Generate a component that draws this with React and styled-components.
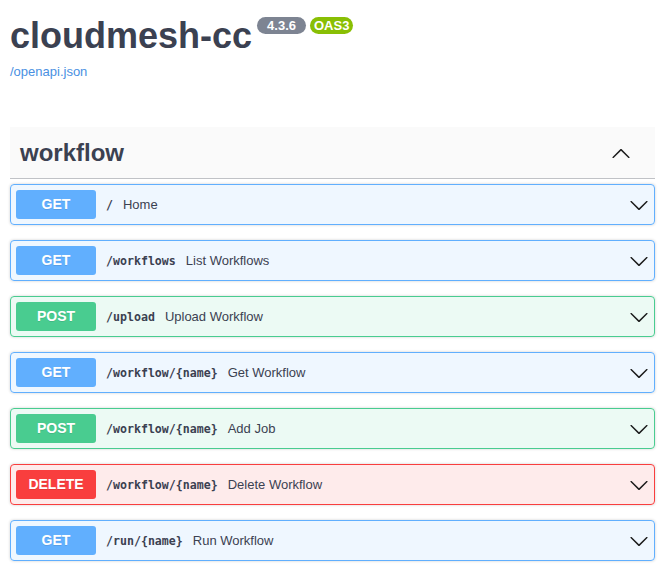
import React from "react";
import styled, { createGlobalStyle } from "styled-components";

const GlobalStyle = createGlobalStyle`
  body {
    margin: 0;
    background: #fff;
    font-family: "Liberation Sans", Arial, sans-serif;
    color: #3b4151;
  }
`;

const Wrapper = styled.div`
  padding: 15px 11px 0 10px;
`;

const Info = styled.div`
  margin-bottom: 48px;
`;

const TitleRow = styled.div`
  display: flex;
  align-items: flex-start;
`;

const Title = styled.h2`
  margin: 0;
  font-size: 36px;
  line-height: 41px;
  font-weight: 700;
  color: #3b4151;
`;

const Badge = styled.small`
  display: inline-block;
  margin: 2px 0 0 ${props => (props.first ? 5 : 4)}px;
  padding: 2px ${props => props.pad}px;
  border-radius: 57px;
  background: ${props => props.color};
  color: #fff;
  font-size: 13px;
  line-height: 13px;
  font-weight: 700;
`;

const SpecLink = styled.a`
  display: block;
  margin-top: 8px;
  font-size: 13px;
  line-height: 15px;
  color: #4990e2;
  text-decoration: none;
`;

const TagHeader = styled.div`
  display: flex;
  align-items: center;
  height: 51px;
  padding: 0 24px 0 10px;
  background: #fafafa;
  border-bottom: 1px solid rgba(59, 65, 81, 0.3);
  margin-bottom: 5px;
`;

const TagName = styled.h3`
  flex: 1;
  margin: 0;
  font-size: 24px;
  font-weight: 700;
  color: #3b4151;
`;

const methods = {
  GET: "97, 175, 254",
  POST: "73, 204, 144",
  DELETE: "249, 62, 62",
};

const Opblock = styled.div`
  display: flex;
  align-items: center;
  height: 29px;
  padding: 5px;
  margin-bottom: 15px;
  border: 1px solid rgb(${props => methods[props.method]});
  background: rgba(${props => methods[props.method]}, 0.1);
  border-radius: 4px;
  box-shadow: 0 0 3px rgba(0, 0, 0, 0.19);
`;

const Method = styled.span`
  min-width: 80px;
  padding: 6px 0;
  border-radius: 3px;
  background: rgb(${props => methods[props.method]});
  color: #fff;
  font-size: 14px;
  line-height: 17px;
  font-weight: 700;
  text-align: center;
  text-shadow: 0 1px 0 rgba(0, 0, 0, 0.1);
`;

const Path = styled.span`
  padding: 0 10px;
  font-family: "DejaVu Sans Mono", "Liberation Mono", monospace;
  font-size: 11.6px;
  font-weight: 600;
  color: #3b4151;
`;

const Description = styled.span`
  flex: 1;
  font-size: 13px;
  color: #3b4151;
`;

const Arrow = ({ up }) => (
  <svg width="20" height="20" viewBox="0 0 20 20" fill="#1b1b1b">
    {up ? (
      <path d="M17.418 14.908c.272.268.709.268.979 0s.271-.701 0-.969l-7.908-7.83c-.27-.268-.707-.268-.979 0l-7.908 7.83c-.27.268-.27.701 0 .969.271.268.709.268.979 0L10 7.761l7.418 7.147z" />
    ) : (
      <path d="M17.418 6.109c.272-.268.709-.268.979 0s.271.701 0 .969l-7.908 7.83c-.27.268-.707.268-.979 0l-7.908-7.83c-.27-.268-.27-.701 0-.969.271-.268.709-.268.979 0L10 13.25l7.418-7.141z" />
    )}
  </svg>
);

const operations = [
  { method: "GET", path: "/", summary: "Home" },
  { method: "GET", path: "/workflows", summary: "List Workflows" },
  { method: "POST", path: "/upload", summary: "Upload Workflow" },
  { method: "GET", path: "/workflow/{name}", summary: "Get Workflow" },
  { method: "POST", path: "/workflow/{name}", summary: "Add Job" },
  { method: "DELETE", path: "/workflow/{name}", summary: "Delete Workflow" },
  { method: "GET", path: "/run/{name}", summary: "Run Workflow" },
];

export default function App() {
  return (
    <Wrapper>
      <GlobalStyle />
      <Info>
        <TitleRow>
          <Title>cloudmesh-cc</Title>
          <Badge first pad={10} color="#7d8492">4.3.6</Badge>
          <Badge pad={4} color="#89bf04">OAS3</Badge>
        </TitleRow>
        <SpecLink href="#">/openapi.json</SpecLink>
      </Info>
      <TagHeader>
        <TagName>workflow</TagName>
        <Arrow up />
      </TagHeader>
      {operations.map((op, i) => (
        <Opblock key={i} method={op.method}>
          <Method method={op.method}>{op.method}</Method>
          <Path>{op.path}</Path>
          <Description>{op.summary}</Description>
          <Arrow />
        </Opblock>
      ))}
    </Wrapper>
  );
}
